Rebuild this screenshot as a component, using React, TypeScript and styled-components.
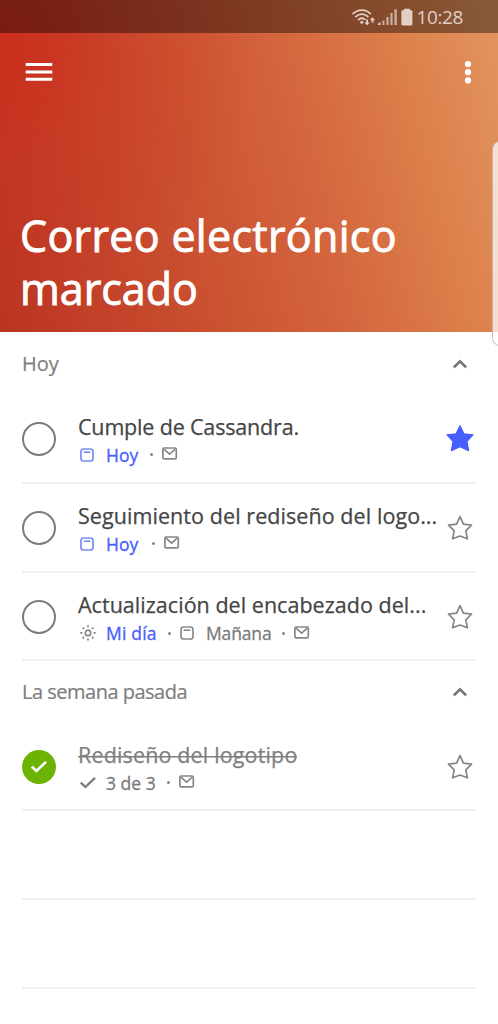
import React from "react";
import styled, { createGlobalStyle } from "styled-components";

const GlobalStyle = createGlobalStyle`
  * { box-sizing: border-box; }
  html, body { margin: 0; padding: 0; background: #fff; }
  body { font-family: "Open Sans", "Noto Sans", sans-serif; overflow: hidden; }
`;

const BLUE = "#465efc";
const GREY = "#7b7b7b";

const Screen = styled.main`
  position: relative;
  width: 498px;
  height: 1024px;
  overflow: hidden;
  background: #fff;
`;

const Hero = styled.header`
  height: 332px;
  display: flex;
  flex-direction: column;
  background:
    radial-gradient(circle at 0 12%, rgba(208, 40, 24, 0.7) 0%, rgba(208, 40, 24, 0.25) 20%, rgba(208, 40, 24, 0) 45%),
    linear-gradient(76deg, #ba3422 0%, #c23f28 16%, #cb5332 40%, #d4653d 60%, #dc7e4a 80%, #e2965f 100%);
`;

const StatusBar = styled.div`
  height: 33px;
  flex: none;
  display: flex;
  align-items: center;
  justify-content: flex-end;
  padding-right: 35px;
  background: rgba(0, 0, 0, 0.4);
  color: #e2cfc6;
`;

const Clock = styled.span`
  margin-left: 4px;
  font-size: 19px;
  line-height: 32px;
  letter-spacing: -0.4px;
`;

const Toolbar = styled.div`
  height: 77px;
  flex: none;
  display: flex;
  justify-content: space-between;
  align-items: center;
  padding: 0 26px 0 25px;
`;

const Title = styled.h1`
  margin: 99px 0 0 20px;
  font-size: 43px;
  font-weight: 400;
  line-height: 53px;
  color: #fff;
  -webkit-text-stroke: 0.9px #fff;
`;

const TitleLine = styled.span<{ $spacing: number }>`
  display: block;
  white-space: nowrap;
  letter-spacing: ${(p) => p.$spacing}px;
`;

const EdgeHandle = styled.div`
  position: absolute;
  left: 492px;
  top: 141px;
  width: 16px;
  height: 205px;
  border: 1.5px solid rgba(150, 140, 135, 0.5);
  border-radius: 9px;
  background: rgba(255, 255, 255, 0.72);
`;

const SectionHeader = styled.div<{ $height: number }>`
  height: ${(p) => p.$height}px;
  display: flex;
  align-items: center;
  justify-content: space-between;
  padding: 1px 30px 0 22px;
  font-size: 20px;
  color: #7e7e7e;
  -webkit-text-stroke: 0.2px #7e7e7e;
`;

const SectionName = styled.span<{ $spacing: number }>`
  letter-spacing: ${(p) => p.$spacing}px;
  line-height: 28px;
`;

const Row = styled.div<{ $height: number; $drop?: number }>`
  height: ${(p) => p.$height}px;
  padding-top: ${(p) => p.$drop ?? 0}px;
  margin: 0 22px;
  display: flex;
  align-items: center;
  border-bottom: 2px solid #f0f0f0;
`;

const Check = styled.div<{ $done?: boolean }>`
  width: 34px;
  height: 34px;
  flex: none;
  display: flex;
  align-items: center;
  justify-content: center;
  border-radius: 50%;
  border: ${(p) => (p.$done ? "none" : "2.5px solid #7c7c7c")};
  background: ${(p) => (p.$done ? "#6bb304" : "transparent")};
`;

const Body = styled.div`
  flex: 1;
  margin-left: 22px;
  padding-top: 3px;
  min-width: 0;
`;

const TaskTitle = styled.div<{ $spacing: number; $done?: boolean }>`
  width: fit-content;
  font-size: 21.5px;
  line-height: 29px;
  white-space: nowrap;
  letter-spacing: ${(p) => p.$spacing}px;
  color: ${(p) => (p.$done ? "#808080" : "#454545")};
  -webkit-text-stroke: 0.25px ${(p) => (p.$done ? "#808080" : "#454545")};
  background: ${(p) => (p.$done ? "linear-gradient(#808080, #808080) 0 16px / 100% 1.5px no-repeat" : "none")};
`;

const Meta = styled.div`
  display: flex;
  align-items: center;
  height: 28px;
  font-size: 17.5px;
  color: ${GREY};
`;

const MetaIcon = styled.span<{ $width: number }>`
  display: flex;
  width: ${(p) => p.$width}px;
  flex: none;
`;

const MetaText = styled.span<{ $width: number; $accent?: boolean; $spacing?: number }>`
  width: ${(p) => p.$width}px;
  flex: none;
  white-space: nowrap;
  letter-spacing: ${(p) => p.$spacing ?? 0}px;
  color: ${(p) => (p.$accent ? BLUE : GREY)};
  -webkit-text-stroke: 0.3px ${(p) => (p.$accent ? BLUE : GREY)};
`;

const Dot = styled.span<{ $gap: number }>`
  width: 3px;
  height: 3px;
  flex: none;
  margin-right: ${(p) => p.$gap}px;
  border-radius: 50%;
  background: #858585;
`;

const StarSlot = styled.div`
  width: 32px;
  flex: none;
  display: flex;
  justify-content: center;
`;

const StatusIcons = () => (
  <svg width="62" height="22" viewBox="0 0 62 22" fill="none">
    <g stroke="#e2cfc6" strokeWidth="1.8" strokeLinecap="round">
      <path d="M2.2 7.6C7 2.9 15 2.9 19.2 7.6" />
      <path d="M4.8 10.6C8.4 7.4 13.6 7.4 16.8 10.6" />
      <path d="M7.6 13.6C9.4 12 12 12 13.8 13.4" />
    </g>
    <circle cx="10.8" cy="16.2" r="1.5" fill="#e2cfc6" />
    <path d="M15.2 13.4h1.8v3h1.8L16.1 19.2 13.3 16.4h1.9zM20.6 16.8v-2.6h-1.8l2.7-2.9 2.7 2.9h-1.8v2.6z" fill="#e2cfc6" />
    <path d="M27 19v-1.2l2.4-2V19z" fill="#e2cfc6" />
    <path d="M31.4 14.6h2V19h-2zM35.4 11h2.2v8h-2.2zM39.4 7h2.2v12h-2.2zM43.4 3.2h2.4V19h-2.4z" fill="#e2cfc6" fillOpacity=".75" />
    <path d="M51.2 4.2h1.8V2.8h6v1.4h1.2q1.2 0 1.2 1.2v12.8q0 1.3-1.3 1.3h-8.4q-1.3 0-1.3-1.3V5.4q0-1.2.8-1.2z" fill="#e2cfc6" />
  </svg>
);

const MenuIcon = () => (
  <svg width="28" height="20" viewBox="0 0 28 20">
    <path d="M.7 1.1h26.6v3H.7zM.7 8.4h26.6v3H.7zM.7 15.7h26.6v3H.7z" fill="#fff" />
  </svg>
);

const MoreIcon = () => (
  <svg width="8" height="26" viewBox="0 0 8 26" fill="#fff">
    <circle cx="4" cy="5" r="3.1" />
    <circle cx="4" cy="13.2" r="3.1" />
    <circle cx="4" cy="21.4" r="3.1" />
  </svg>
);

const Chevron = () => (
  <svg width="16" height="12" viewBox="0 0 16 12" fill="none">
    <path d="M1.8 9.4 8 3.4l6.2 6" stroke="#777" strokeWidth="2.7" />
  </svg>
);

const Star = ({ filled }: { filled?: boolean }) => (
  <svg width="30" height="30" viewBox="0 0 30 30">
    {filled ? (
      <path
        d="M15 1.7 18.9 9.8 28 10.8 22 17.4 23.6 26.6 15 22.8 6.4 26.6 8 17.4 2 10.8 11.1 9.8Z"
        fill={BLUE} stroke={BLUE} strokeWidth="1.2" strokeLinejoin="round"
      />
    ) : (
      <path
        d="M15 3.6 18.4 11.2 26.5 12.1 20.8 17.8 22.4 25.8 15 23 7.6 25.8 9.2 17.8 3.5 12.1 11.6 11.2Z"
        fill="none" stroke="#858585" strokeWidth="1.7" strokeLinejoin="round"
      />
    )}
  </svg>
);

const CalendarIcon = ({ color }: { color: string }) => (
  <svg width="16" height="14" viewBox="-2 0 16 14" fill="none" stroke={color}>
    <rect x="1" y="1" width="12" height="12" rx="2.6" strokeWidth="1.7" />
    <path d="M3.6 4.2h6.8" strokeWidth="1.6" />
  </svg>
);

const MailIcon = () => (
  <svg width="16" height="15" viewBox="0 0 16 15" fill="none" stroke="#868686">
    <rect x=".9" y="1" width="13.4" height="10.8" rx="1.4" strokeWidth="1.7" />
    <path d="M2 2.2 7.6 7.2l5.6-5" strokeWidth="1.6" />
  </svg>
);

const SunIcon = () => (
  <svg width="19" height="17" viewBox="-2 .6 19 17" fill="none" stroke="#858585" strokeWidth="1.7">
    <circle cx="8" cy="8.5" r="2.7" />
    <path d="M8 .8v2.1M8 14.1v2.1M.3 8.5h2.1M13.6 8.5h2.1M2.6 3.1l1.5 1.5M11.9 12.4l1.5 1.5M13.4 3.1l-1.5 1.5M4.1 12.4l-1.5 1.5" />
  </svg>
);

const TickIcon = ({ color, width, height, stroke }: { color: string; width: number; height: number; stroke: number }) => (
  <svg width={width} height={height} viewBox="0 0 18 13" fill="none">
    <path d="M1.8 6.6 6.4 11 16 1.8" stroke={color} strokeWidth={stroke} />
  </svg>
);

type TaskProps = {
  title: string;
  spacing: number;
  height: number;
  drop?: number;
  done?: boolean;
  starred?: boolean;
  children: React.ReactNode;
};

const Task = ({ title, spacing, height, drop, done, starred, children }: TaskProps) => (
  <Row $height={height} $drop={drop}>
    <Check $done={done}>{done && <TickIcon color="#fff" width={18} height={13} stroke={2.5} />}</Check>
    <Body>
      <TaskTitle $spacing={spacing} $done={done}>{title}</TaskTitle>
      <Meta>{children}</Meta>
    </Body>
    <StarSlot><Star filled={starred} /></StarSlot>
  </Row>
);

export default function App() {
  return (
    <Screen>
      <GlobalStyle />
      <Hero>
        <StatusBar>
          <StatusIcons />
          <Clock>10:28</Clock>
        </StatusBar>
        <Toolbar>
          <MenuIcon />
          <MoreIcon />
        </Toolbar>
        <Title>
          <TitleLine $spacing={0.3}>Correo electrónico</TitleLine>
          <TitleLine $spacing={0}>marcado</TitleLine>
        </Title>
      </Hero>

      <SectionHeader $height={63}>
        <SectionName $spacing={0}>Hoy</SectionName>
        <Chevron />
      </SectionHeader>
      <Task title="Cumple de Cassandra." spacing={-0.17} height={89} starred>
        <MetaIcon $width={28}><CalendarIcon color="#7b8bf5" /></MetaIcon>
        <MetaText $width={44} $accent>Hoy</MetaText>
        <Dot $gap={9} />
        <MailIcon />
      </Task>
      <Task title="Seguimiento del rediseño del logo..." spacing={0.07} height={89}>
        <MetaIcon $width={28}><CalendarIcon color="#7b8bf5" /></MetaIcon>
        <MetaText $width={46} $accent>Hoy</MetaText>
        <Dot $gap={9} />
        <MailIcon />
      </Task>
      <Task title="Actualización del encabezado del..." spacing={0.03} height={88} drop={2}>
        <MetaIcon $width={28}><SunIcon /></MetaIcon>
        <MetaText $width={62} $accent $spacing={0.2}>Mi día</MetaText>
        <Dot $gap={7} />
        <MetaIcon $width={28}><CalendarIcon color="#8a8a8a" /></MetaIcon>
        <MetaText $width={76} $spacing={-0.15}>Mañana</MetaText>
        <Dot $gap={9} />
        <MailIcon />
      </Task>

      <SectionHeader $height={61}>
        <SectionName $spacing={-0.5}>La semana pasada</SectionName>
        <Chevron />
      </SectionHeader>
      <Task title="Rediseño del logotipo" spacing={0.15} height={89} drop={2} done>
        <MetaIcon $width={28}><TickIcon color="#7c7c7c" width={20} height={13} stroke={2.3} /></MetaIcon>
        <MetaText $width={61}>3 de 3</MetaText>
        <Dot $gap={9} />
        <MailIcon />
      </Task>
      <Row $height={89} />
      <Row $height={89} />
      <EdgeHandle />
    </Screen>
  );
}
